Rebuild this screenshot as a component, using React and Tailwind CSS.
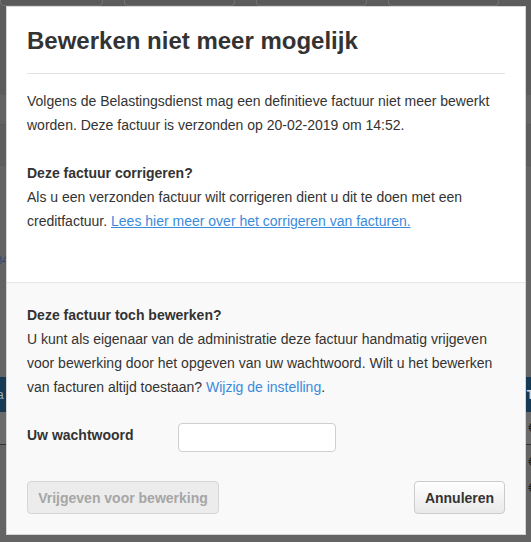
import React, { useState } from "react";

const font = { fontFamily: '"Liberation Sans", Arial, Helvetica, sans-serif' };

function PageBehind() {
    // the page under the dimmed overlay, only its edges show
    return (
        <div className="absolute inset-0 bg-[#646464] overflow-hidden">
            <div className="h-[95px] bg-[#5c5c5c] flex gap-[21px]">
                <div className="w-[103px] h-[6px] border border-t-0 border-[#707070] rounded-b-[4px] bg-[#5a5a5a]" />
                <div className="w-[111px] h-[6px] border border-t-0 border-[#707070] rounded-b-[4px] bg-[#5a5a5a]" />
                <div className="w-[111px] h-[6px] border border-t-0 border-[#707070] rounded-b-[4px] bg-[#5a5a5a]" />
                <div className="w-[111px] h-[6px] border border-t-0 border-[#707070] rounded-b-[4px] bg-[#5a5a5a]" />
            </div>
            <div className="h-[30px] border-b border-[#5a5a5a]" />
            <div className="h-[40px] bg-[#5e5e5e]" />
            <div className="h-[60px] border-t border-[#5a5a5a]" />
            <div className="h-[70px] flex items-center text-[11px] text-[#2a4a70]" style={font}>
                <span className="-ml-[4px]">34</span>
            </div>
            <div className="h-[82px]" />
            <div className="h-[35px] bg-[#163a55] flex items-center justify-between text-[12px] text-[#9bb0c2]" style={font}>
                <span className="-ml-[3px]">a</span>
                <span className="-mr-[3px] font-bold text-[#cfd8e0]">T</span>
            </div>
            <div className="h-[32px] bg-[#6b6b6b] flex items-center justify-end text-[12px] text-[#222]" style={font}>
                <span className="-mr-[4px]">€</span>
            </div>
            <div className="h-[98px] border-t border-[#333] flex flex-col justify-start items-end gap-[8px] pt-[8px] text-[12px] text-[#222]" style={font}>
                <span className="-mr-[4px]">€</span>
                <span className="-mr-[4px]">€</span>
            </div>
        </div>
    );
}

export default function App() {
    const [password, setPassword] = useState("");

    return (
        <div className="relative w-[531px] h-[542px] overflow-hidden" style={font}>
            <PageBehind />
            <div className="absolute left-[6px] top-[6px] w-[520px] border border-[#d6d6d6] bg-white text-[#333] text-[14px] leading-[24px]">
                <div className="mx-[20px] pt-[22px] pb-[20px] border-b border-[#e2e2e2]">
                    <h1 className="text-[24px] leading-[24px] font-bold text-[#333]">
                        Bewerken niet meer mogelijk
                    </h1>
                </div>
                <div className="px-[20px] pt-[15px] pb-[49px] border-b border-[#e6e6e6]">
                    <p>
                        Volgens de Belastingsdienst mag een definitieve factuur niet meer bewerkt
                        worden. Deze factuur is verzonden op 20-02-2019 om 14:52.
                    </p>
                    <p className="mt-[24px] font-bold">Deze factuur corrigeren?</p>
                    <p>
                        Als u een verzonden factuur wilt corrigeren dient u dit te doen met een
                        creditfactuur.{" "}
                        <a href="#" className="text-[#3a8bdc] underline">
                            Lees hier meer over het corrigeren van facturen.
                        </a>
                    </p>
                </div>
                <div className="bg-[#f9f9f9] px-[20px] pt-[20px] pb-[20px]">
                    <p className="font-bold">Deze factuur toch bewerken?</p>
                    <p>
                        U kunt als eigenaar van de administratie deze factuur handmatig vrijgeven
                        voor bewerking door het opgeven van uw wachtwoord. Wilt u het bewerken
                        van facturen altijd toestaan?{" "}
                        <a href="#" className="text-[#3a8bdc]">Wijzig de instelling</a>.
                    </p>
                    <div className="flex items-start mt-[24px]">
                        <label className="w-[151px] font-bold">Uw wachtwoord</label>
                        <input
                            type="password"
                            value={password}
                            onChange={(e) => setPassword(e.target.value)}
                            className="w-[158px] h-[29px] bg-white border border-[#cfcfcf] rounded-[4px] px-2 outline-none"
                        />
                    </div>
                    <div className="flex justify-between mt-[29px]">
                        <button
                            disabled
                            className="w-[192px] h-[33px] rounded-[4px] border border-[#d6d6d6] bg-[#ececec] text-[#a6a6a6] font-bold text-[14px]"
                        >
                            Vrijgeven voor bewerking
                        </button>
                        <button className="w-[91px] h-[33px] rounded-[4px] border border-[#cccccc] bg-gradient-to-b from-white to-[#e9e9e9] text-[#333] font-bold text-[14px]">
                            Annuleren
                        </button>
                    </div>
                </div>
            </div>
        </div>
    );
}
